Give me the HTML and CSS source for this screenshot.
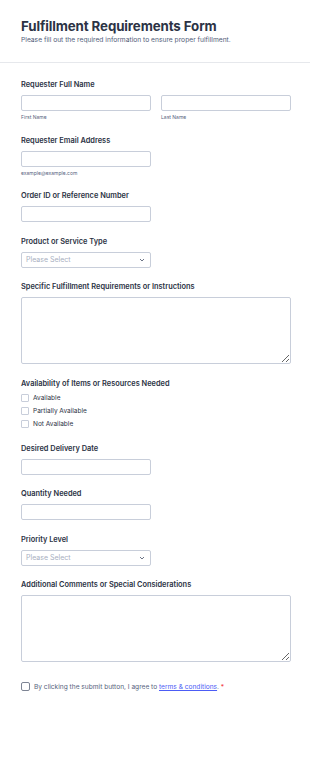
FILE: index.html
```html
<!DOCTYPE html>
<html lang="en">
<head>
  <meta charset="UTF-8">
  <meta name="viewport" content="width=device-width, initial-scale=1.0">
  <title>Fulfillment Requirements Form</title>
  <link rel="stylesheet" href="styles.css">
</head>
<body>
  <div class="header">
    <h1>Fulfillment Requirements Form</h1>
    <p class="subtitle">Please fill out the required information to ensure proper fulfillment.</p>
  </div>

  <form class="form">
    <div class="field">
      <label class="label">Requester Full Name</label>
      <div class="name-row">
        <div class="name-col">
          <input type="text" class="input">
          <span class="sublabel">First Name</span>
        </div>
        <div class="name-col">
          <input type="text" class="input">
          <span class="sublabel">Last Name</span>
        </div>
      </div>
    </div>

    <div class="field">
      <label class="label">Requester Email Address</label>
      <input type="email" class="input half">
      <span class="sublabel">example@example.com</span>
    </div>

    <div class="field">
      <label class="label">Order ID or Reference Number</label>
      <input type="text" class="input half">
    </div>

    <div class="field">
      <label class="label">Product or Service Type</label>
      <div class="select half">
        <span>Please Select</span>
        <svg width="6" height="4" viewBox="0 0 6 4"><path d="M1 1l2 2 2-2" fill="none" stroke="#6c7486" stroke-width="1"/></svg>
      </div>
    </div>

    <div class="field">
      <label class="label">Specific Fulfillment Requirements or Instructions</label>
      <textarea class="textarea"></textarea>
    </div>

    <div class="field">
      <label class="label">Availability of Items or Resources Needed</label>
      <div class="checks">
        <label class="check"><span class="box"></span>Available</label>
        <label class="check"><span class="box"></span>Partially Available</label>
        <label class="check"><span class="box"></span>Not Available</label>
      </div>
    </div>

    <div class="field">
      <label class="label">Desired Delivery Date</label>
      <input type="text" class="input half">
    </div>

    <div class="field">
      <label class="label">Quantity Needed</label>
      <input type="text" class="input half">
    </div>

    <div class="field">
      <label class="label">Priority Level</label>
      <div class="select half">
        <span>Please Select</span>
        <svg width="6" height="4" viewBox="0 0 6 4"><path d="M1 1l2 2 2-2" fill="none" stroke="#6c7486" stroke-width="1"/></svg>
      </div>
    </div>

    <div class="field">
      <label class="label">Additional Comments or Special Considerations</label>
      <textarea class="textarea"></textarea>
    </div>

    <div class="agree">
      <span class="box big"></span>
      <span>By clicking the submit button, I agree to <a href="#">terms &amp; conditions</a>. <span class="req">*</span></span>
    </div>
  </form>
</body>
</html>
```

FILE: styles.css
```css
body {
  margin: 0;
  font-family: Inter, "Noto Sans", sans-serif;
  background-color: #ffffff;
  color: #2c3345;
}
.header {
  padding: 16px 21px 0;
  height: 46px;
  border-bottom: 1px solid #e6e8ec;
}
h1 {
  margin: 0;
  font-size: 13.3px;
  font-weight: 700;
  line-height: 20px;
  letter-spacing: -0.1px;
  color: #2c3345;
}
.subtitle {
  margin: 0;
  font-size: 6.7px;
  line-height: 9px;
  color: #4f5b78;
}
.form {
  padding: 17px 19px 0 21px;
}
.field {
  margin-bottom: 14.5px;
}
.label {
  display: block;
  font-size: 7.4px;
  font-weight: 600;
  line-height: 10px;
  margin-bottom: 5px;
  color: #2c3345;
}
.name-row {
  display: flex;
  gap: 10px;
}
.name-col {
  flex: 1;
}
.input, .select {
  display: block;
  box-sizing: border-box;
  width: 100%;
  height: 16px;
  margin: 0;
  border: 1px solid #c8ceda;
  border-radius: 2px;
  background: #fff;
  padding: 0 5px;
}
.half {
  width: 130px;
}
.sublabel {
  display: block;
  font-size: 5px;
  line-height: 7px;
  margin-top: 3px;
  color: #57647e;
}
.select {
  display: flex;
  align-items: center;
  justify-content: space-between;
  padding: 0 5px 0 4px;
  font-size: 7px;
  color: #a8afbf;
}
.textarea {
  display: block;
  box-sizing: border-box;
  width: 100%;
  height: 67px;
  margin: 0;
  border: 1px solid #c8ceda;
  border-radius: 2px;
  resize: vertical;
}
.checks {
  display: flex;
  flex-direction: column;
  gap: 5px;
  padding-bottom: 1.5px;
}
.check {
  display: flex;
  align-items: center;
  gap: 4px;
  font-size: 6.5px;
  line-height: 8px;
  color: #2c3345;
}
.box {
  display: inline-block;
  box-sizing: border-box;
  width: 8px;
  height: 8px;
  border: 1px solid #c8ceda;
  border-radius: 1px;
  background: #fff;
}
.box.big {
  width: 9px;
  height: 9px;
  border-color: #7d8494;
  border-radius: 2px;
}
.agree {
  display: flex;
  align-items: center;
  gap: 4px;
  margin-top: 19.5px;
  font-size: 6.6px;
  line-height: 10px;
  color: #57647e;
}
.agree a {
  color: #4c5cf5;
}
.req {
  color: #f23a3c;
}
```
